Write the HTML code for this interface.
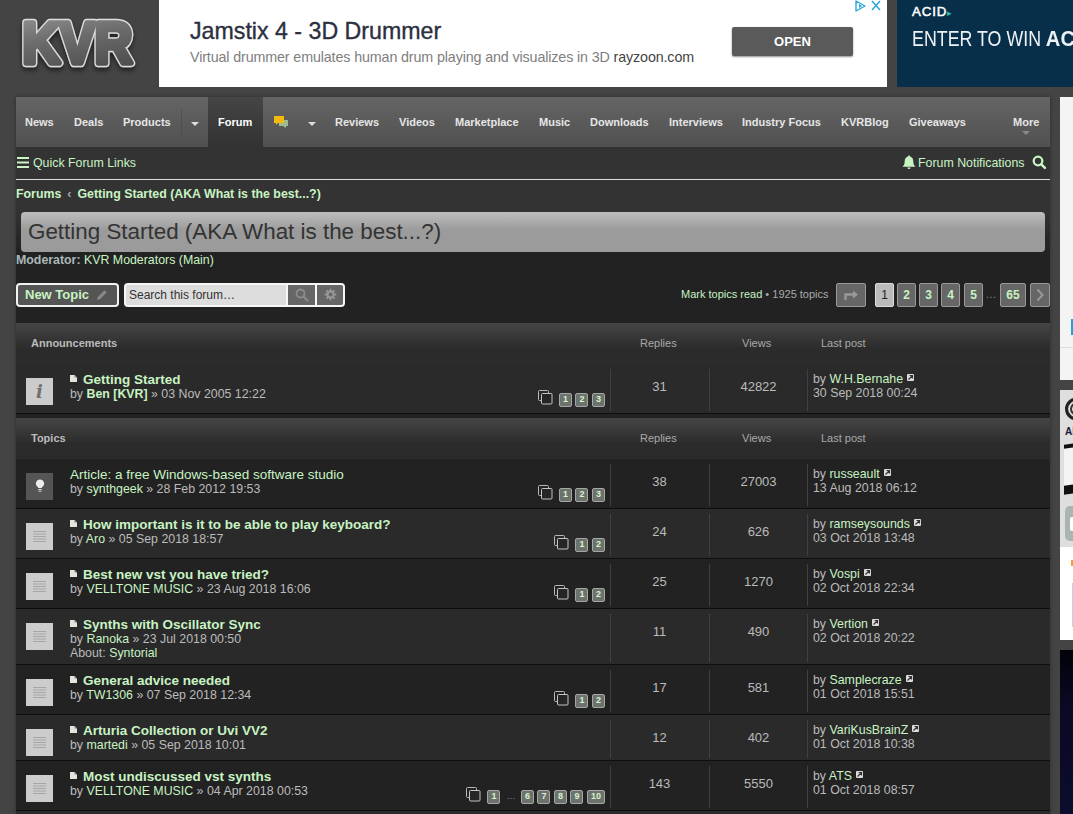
<!DOCTYPE html>
<html lang="en">
<head>
<meta charset="utf-8">
<title>Getting Started (AKA What is the best...?) - KVR Audio</title>
<style>
*{box-sizing:border-box;margin:0;padding:0}
html,body{width:1073px;height:814px;overflow:hidden}
body{background:#444;font-family:"Liberation Sans",Arial,sans-serif;font-size:12px;color:#bbb;position:relative}
a{color:#c8f3c3;text-decoration:none}
/* header */
#logo{position:absolute;left:14px;top:10px;width:130px;height:66px}
#ad1{position:absolute;left:159px;top:0;width:728px;height:87px;background:#fff}
#ad1 .t{position:absolute;left:31px;top:17px;font-size:23.2px;line-height:28px;color:#2b2f40;white-space:nowrap;-webkit-text-stroke:.35px #2b2f40}
#ad1 .d{position:absolute;left:31px;top:48px;font-size:14.3px;line-height:18px;color:#7e7e7e;white-space:nowrap;letter-spacing:-.13px}
#ad1 .d b{font-weight:normal;color:#444}
#ad1 .btn{position:absolute;left:573px;top:27px;width:121px;height:29px;background:#5a5a5a;border-radius:2px;color:#fff;font-weight:bold;font-size:13px;text-align:center;line-height:30px;box-shadow:0 1px 2px rgba(0,0,0,.45)}
#ad2{position:absolute;left:897px;top:0;width:176px;height:87px;background:#072f4a;overflow:hidden;color:#fff}
#ad2 .a{position:absolute;left:15px;top:4px;font-size:13.3px;line-height:16px;letter-spacing:.9px;-webkit-text-stroke:.5px #fff}
#ad2 .e{position:absolute;left:15px;top:26px;font-size:22px;line-height:26px;white-space:nowrap;transform:scaleX(.81);transform-origin:0 0;color:#eef2f5}
/* wrapper */
#wrap{position:absolute;left:16px;top:97px;width:1034px;height:717px;background:#333;overflow:hidden;box-shadow:0 0 4px rgba(0,0,0,.35)}
#nav{position:absolute;left:0;top:0;width:1034px;height:50px;background:linear-gradient(#656565,#505050);font-weight:bold;font-size:11px;color:#e6e6e6}
#nav span{position:absolute;top:19px;line-height:13px;white-space:nowrap}
#nav .act{position:absolute;left:192px;top:0;width:55px;height:50px;background:linear-gradient(#454545,#323232)}
.car{position:absolute;width:0;height:0;border-left:4px solid transparent;border-right:4px solid transparent;border-top:4px solid #ddd}
#ql{position:absolute;left:0;top:50px;width:1034px;height:32px;font-size:12.375px;line-height:14px}
#ql a{position:absolute;top:9px;white-space:nowrap}
#hr{position:absolute;left:0;top:82px;width:1034px;height:1px;background:#ddd}
#main{position:absolute;left:0;top:83px;width:1034px;height:634px;background:linear-gradient(#333 0,#333 32px,#222 72px,#222 100%)}
#bc{position:absolute;left:0;top:7px;font-weight:bold;font-size:12.375px;line-height:14px;white-space:nowrap}
#bc i{font-style:normal;color:#aaa;padding:0 6px 0 6px}
#ttl{position:absolute;left:5px;top:32px;width:1024px;height:40px;border-radius:4px;background:linear-gradient(#bebebe 0,#9b9b9b 45%,#9b9b9b 100%);color:#333;font-size:22.4px;line-height:40px;padding-left:7px;white-space:nowrap}
#mod{position:absolute;left:0;top:73px;font-size:12.375px;line-height:14px;white-space:nowrap}
#mod b{color:#a9b8b8}
.btn2{position:absolute;border:2px solid #f2f2f2;border-radius:4px;background:#555;height:24px}
#nt{left:0;top:103px;width:103px;font-weight:bold;font-size:13px;line-height:20px;color:#c8f3c3;padding-left:7px}
#sb{position:absolute;left:108px;top:103px;width:221px;height:24px;border:2px solid #f6f6f6;border-radius:4px;background:#ddd;overflow:hidden}
#sb .in{position:absolute;left:3px;top:3px;font-size:12px;line-height:14px;color:#333;white-space:nowrap}
#sb .b1{position:absolute;left:160px;top:0;width:29px;height:20px;background:#666;border-left:2px solid #f6f6f6}
#sb .b2{position:absolute;left:191px;top:0;width:26px;height:20px;background:#666}
#pg{position:absolute;top:103px;left:0;width:1034px;height:24px;font-size:11px}
#pg .mt{position:absolute;left:665px;top:5px;line-height:13px;white-space:nowrap;color:#aaa}
.pb{position:absolute;top:0;height:24px;width:19px;border:1px solid #999;border-radius:2px;background:#666;color:#c8f3c3;font-weight:bold;font-size:12px;line-height:22px;text-align:center}
.pb.cur{background:#bbb;border-color:#ddd;color:#222;font-weight:normal}
/* lists */
.lh{position:absolute;left:0;width:1034px;height:41px;background:linear-gradient(#454545 0,#2b2b2b 26px,#2b2b2b 100%);font-size:11px;color:#aaa}
.lh span{position:absolute;top:14px;line-height:13px;white-space:nowrap}
.lh b{position:absolute;left:15px;top:14px;line-height:13px;color:#bbb}
.row{position:absolute;left:0;width:1034px;border-bottom:1px solid #0e0e0e;font-size:12.375px;line-height:14px}
.row.d{background:#222}.row.l{background:#2a2a2a}
.ic{position:absolute;left:10px;top:14px;width:27px;height:27px;background:#ccc}
.ic.dk{background:#555}
.tt{position:absolute;left:54px;top:9px;white-space:nowrap}
.tt .t{font-size:13.5px;line-height:14px}
.tt .t.b{font-weight:bold}
.tt .doc{display:inline-block;width:7px;height:7px;margin-right:6px;vertical-align:2.500px}
.vs{position:absolute;top:5px;bottom:2px;width:1px;background:#404040}
.num{position:absolute;top:15px;width:99px;text-align:center;font-size:13px;line-height:15px;color:#bbb}
.lp{position:absolute;left:797px;top:8px;white-space:nowrap}
.lpi{display:inline-block;width:7px;height:7px;margin-left:.5px;vertical-align:2px}
.pgs{position:absolute;right:445px;top:29px;height:13px;white-space:nowrap;font-size:0}
.pgs a{display:inline-block;vertical-align:top;min-width:13px;height:13.500px;margin-left:3.500px;padding:0 3px;border:1px solid #a4a8a4;border-radius:2px;background:#6d726d;color:#d4f4d0;font-weight:bold;font-size:9px;line-height:11.500px;text-align:center}
.pgs svg{vertical-align:top;margin-right:2.500px;margin-top:-3px}
.pgs i{display:inline-block;vertical-align:top;font-style:normal;font-size:9px;line-height:13px;color:#999;margin-left:4px;width:13px;text-align:center}
/* right strip */
.rs{position:absolute;left:1060px;width:13px}
</style>
</head>
<body>
<svg id="logo" viewBox="0 0 130 66"><defs><linearGradient id="lg" x1="0" y1="0" x2="0.300" y2="1"><stop offset="0" stop-color="#979797"/><stop offset=".5" stop-color="#6c6c6c"/><stop offset="1" stop-color="#505050"/></linearGradient><filter id="ls" x="-10%" y="-10%" width="120%" height="140%"><feDropShadow dx="0" dy="3" stdDeviation="2.500" flood-color="#000" flood-opacity=".55"/></filter></defs>
<g style="font-family:'Liberation Sans',sans-serif;font-weight:bold;font-size:58px" stroke-linejoin="round"><text x="8.500" y="53" textLength="110" lengthAdjust="spacingAndGlyphs" fill="#dcdcdc" stroke="#dcdcdc" stroke-width="8.500" filter="url(#ls)">KVR</text><text x="8.500" y="53" textLength="110" lengthAdjust="spacingAndGlyphs" fill="url(#lg)" stroke="url(#lg)" stroke-width="5.500">KVR</text></g></svg>
<div id="ad1"><div class="t">Jamstix 4 - 3D Drummer</div><div class="d">Virtual drummer emulates human drum playing and visualizes in 3D <b>rayzoon.com</b></div><div class="btn">OPEN</div>
<svg style="position:absolute;left:694px;top:-1px" width="30" height="14" viewBox="0 0 30 14"><path d="M3 2 L12 7 L3 12 Z" fill="none" stroke="#29a7d8" stroke-width="1.4" stroke-linejoin="round"/><path d="M6 5v4l3-2z" fill="#29a7d8"/><path d="M19 2l8 9M27 2l-8 9" stroke="#29a7d8" stroke-width="1.5" fill="none"/></svg></div>
<div id="ad2"><div class="a">ACID<span style="color:#2cc0b0;font-size:9px;-webkit-text-stroke:0;letter-spacing:0;margin-left:0">&#9656;</span></div><div class="e">ENTER TO WIN <b style="display:inline-block;transform:scaleX(1.13);transform-origin:0 0;letter-spacing:.3px">ACID</b></div></div>
<div id="wrap"><div id="nav"><div class="act"></div><span style="left:9px">News</span><span style="left:58px">Deals</span><span style="left:107px">Products</span><span style="left:202px;color:#fff">Forum</span><span style="left:319px">Reviews</span><span style="left:383px">Videos</span><span style="left:439px">Marketplace</span><span style="left:523px">Music</span><span style="left:574px">Downloads</span><span style="left:653px">Interviews</span><span style="left:726px">Industry Focus</span><span style="left:825px">KVRBlog</span><span style="left:893px">Giveaways</span><span style="left:997px">More</span><div class="car" style="left:175px;top:25px"></div><div class="car" style="left:292px;top:25px"></div><div class="car" style="left:1006px;top:34px;border-top-color:#8a8a8a"></div><div style="position:absolute;left:165px;top:12px;width:1px;height:26px;background:rgba(0,0,0,.12)"></div><svg style="position:absolute;left:257px;top:18px" width="16" height="14" viewBox="0 0 16 14"><path d="M6 5h9v6h-2v2l-3-2H6z" fill="#9dbb8f"/><path d="M1 1h10v7H5l-2 2V8H1z" fill="#f2b90f"/></svg></div><div id="ql">
<svg style="position:absolute;left:1px;top:10px" width="12" height="11" viewBox="0 0 12 11"><path d="M0 1h12M0 5.5h12M0 10h12" stroke="#c8f3c3" stroke-width="2"/></svg>
<a style="left:17px">Quick Forum Links</a>
<svg style="position:absolute;left:885.500px;top:7.500px" width="14" height="15.100" viewBox="0 0 13 14"><path d="M6.5 0.5c.6 0 1 .4 1 1 2 .5 3 2.200 3 4.500 0 2.500.8 3.800 2 4.800H.5c1.200-1 2-2.300 2-4.800 0-2.300 1-4 3-4.500 0-.6.400-1 1-1zM5 11.600h3a1.500 1.500 0 0 1-3 0z" fill="#c8f3c3"/></svg>
<a style="left:902px">Forum Notifications</a>
<svg style="position:absolute;left:1016px;top:8px" width="15" height="15" viewBox="0 0 15 15"><circle cx="6" cy="6" r="4.300" fill="none" stroke="#c8f3c3" stroke-width="2.300"/><path d="M9.300 9.300l3.600 3.600" stroke="#c8f3c3" stroke-width="2.600" stroke-linecap="round"/></svg>
</div><div id="hr"></div><div id="main"><div id="bc"><a>Forums</a><i>&#8249;</i><a>Getting Started (AKA What is the best...?)</a></div><div id="ttl">Getting Started (AKA What is the best...?)</div><div id="mod"><b>Moderator:</b> <a>KVR Moderators (Main)</a></div><div class="btn2" id="nt">New Topic<svg style="position:absolute;left:78px;top:4px" width="12" height="12" viewBox="0 0 12 12"><path d="M1 11l.8-3L8.500 1.300l2.200 2.200L4 10.200z" fill="#888"/></svg></div><div id="sb"><div class="in">Search this forum…</div><div class="b1"><svg style="position:absolute;left:7px;top:3px" width="14" height="14" viewBox="0 0 14 14"><circle cx="5.500" cy="5.500" r="4" fill="none" stroke="#8c8c8c" stroke-width="1.800"/><path d="M8.500 8.500l4 4" stroke="#8c8c8c" stroke-width="2.200" stroke-linecap="round"/></svg></div><div style="position:absolute;left:189px;top:0;width:2px;height:20px;background:#f6f6f6"></div><div class="b2"><svg style="position:absolute;left:6.500px;top:2.500px" width="13" height="13" viewBox="0 0 14 14"><g fill="none" stroke="#999"><circle cx="7" cy="7" r="3.200" stroke-width="2.200"/><path d="M7 .8v2.400M7 10.800v2.400M.8 7h2.400M10.800 7h2.400M2.600 2.600l1.700 1.700M9.700 9.700l1.700 1.700M11.400 2.600L9.700 4.300M4.300 9.700l-1.700 1.700" stroke-width="2"/></g></svg></div></div><div id="pg"><div class="mt"><a>Mark topics read</a> &bull; 1925 topics</div><div class="pb" style="left:820px;width:30px;color:#999"><svg style="position:absolute;left:7px;top:5px" width="15" height="12" viewBox="0 0 15 12"><path d="M1.500 11V5.500h8" fill="none" stroke="#999" stroke-width="2.400"/><path d="M9 1.500l5 4-5 4z" fill="#999"/></svg></div><div class="pb cur" style="left:859px">1</div><div class="pb" style="left:881px">2</div><div class="pb" style="left:903px">3</div><div class="pb" style="left:925px">4</div><div class="pb" style="left:948px">5</div><div style="position:absolute;left:968px;top:5px;width:14px;text-align:center;color:#888;font-size:11px">…</div><div class="pb" style="left:984px;width:26px">65</div><div class="pb" style="left:1014px;width:20px;color:#999"><svg style="position:absolute;left:5px;top:4px" width="8" height="14" viewBox="0 0 8 14"><path d="M1.500 1.500l5 5.500-5 5.500" fill="none" stroke="#999" stroke-width="2"/></svg></div></div><div class="lh" style="top:143px"><b>Announcements</b><span style="left:624px">Replies</span><span style="left:726px">Views</span><span style="left:805px">Last post</span></div><div class="row l" style="top:184px;height:50px"><div class="ic"><span style="position:absolute;left:0;width:27px;top:3px;text-align:center;font-family:'DejaVu Serif',serif;font-style:italic;font-weight:bold;font-size:18px;line-height:21px;color:#707070">i</span></div><div class="tt"><svg class="doc" viewBox="0 0 7 7"><path d="M0 0h4.500L7 2.500V7H0z" fill="#e4e4dc"/><path d="M4.500 0v2.500H7z" fill="#888"/></svg><a class="t b">Getting Started</a><br>by <a style="font-weight:bold">Ben [KVR]</a> &raquo; 03 Nov 2005 12:22</div><div class="pgs"><svg width="15" height="15" viewBox="0 0 15 15"><rect x=".5" y=".5" width="10" height="10" rx="1" fill="none" stroke="#b8b8b8"/><rect x="3.500" y="3.500" width="10.500" height="10.500" rx="1" fill="#262626" stroke="#c4c4c4"/></svg><a>1</a><a>2</a><a>3</a></div><div class="vs" style="left:594px"></div><div class="vs" style="left:693px"></div><div class="vs" style="left:791px"></div><div class="num" style="left:594px">31</div><div class="num" style="left:693px">42822</div><div class="lp">by <a>W.H.Bernahe</a> <svg class="lpi" viewBox="0 0 7 7"><rect width="7" height="7" rx="1" fill="#ddd"/><path d="M1.500 5.500L5 2M2.500 1.500h3v3" fill="none" stroke="#333" stroke-width="1.200"/></svg><br>30 Sep 2018 00:24</div></div><div class="lh" style="top:238px"><b>Topics</b><span style="left:624px">Replies</span><span style="left:726px">Views</span><span style="left:805px">Last post</span></div><div class="row d" style="top:279px;height:50px"><div class="ic dk"><svg style="position:absolute;left:8.500px;top:6px" width="10" height="13.600" viewBox="0 0 11 15"><path d="M5.500 0.500a4.500 4.500 0 0 1 2.700 8.100c-.5.400-.7.900-.7 1.400h-4c0-.5-.2-1-.7-1.400A4.500 4.500 0 0 1 5.500.5z" fill="#eee"/><path d="M3.500 11h4v1.200h-4zM4 13h3v1H4z" fill="#ddd"/></svg></div><div class="tt"><a class="t">Article: a free Windows-based software studio</a><br>by <a>synthgeek</a> &raquo; 28 Feb 2012 19:53</div><div class="pgs"><svg width="15" height="15" viewBox="0 0 15 15"><rect x=".5" y=".5" width="10" height="10" rx="1" fill="none" stroke="#b8b8b8"/><rect x="3.500" y="3.500" width="10.500" height="10.500" rx="1" fill="#262626" stroke="#c4c4c4"/></svg><a>1</a><a>2</a><a>3</a></div><div class="vs" style="left:594px"></div><div class="vs" style="left:693px"></div><div class="vs" style="left:791px"></div><div class="num" style="left:594px">38</div><div class="num" style="left:693px">27003</div><div class="lp">by <a>russeault</a> <svg class="lpi" viewBox="0 0 7 7"><rect width="7" height="7" rx="1" fill="#ddd"/><path d="M1.500 5.500L5 2M2.500 1.500h3v3" fill="none" stroke="#333" stroke-width="1.200"/></svg><br>13 Aug 2018 06:12</div></div><div class="row l" style="top:329px;height:50px"><div class="ic"><svg style="position:absolute;left:7px;top:8px" width="13" height="12" viewBox="0 0 13 12"><path d="M0 .5h13M0 3h13M0 5.500h13M0 8h13M0 10.500h13" stroke="#a6a6a6" stroke-width="1"/></svg></div><div class="tt"><svg class="doc" viewBox="0 0 7 7"><path d="M0 0h4.500L7 2.500V7H0z" fill="#e4e4dc"/><path d="M4.500 0v2.500H7z" fill="#888"/></svg><a class="t b">How important is it to be able to play keyboard?</a><br>by <a>Aro</a> &raquo; 05 Sep 2018 18:57</div><div class="pgs"><svg width="15" height="15" viewBox="0 0 15 15"><rect x=".5" y=".5" width="10" height="10" rx="1" fill="none" stroke="#b8b8b8"/><rect x="3.500" y="3.500" width="10.500" height="10.500" rx="1" fill="#262626" stroke="#c4c4c4"/></svg><a>1</a><a>2</a></div><div class="vs" style="left:594px"></div><div class="vs" style="left:693px"></div><div class="vs" style="left:791px"></div><div class="num" style="left:594px">24</div><div class="num" style="left:693px">626</div><div class="lp">by <a>ramseysounds</a> <svg class="lpi" viewBox="0 0 7 7"><rect width="7" height="7" rx="1" fill="#ddd"/><path d="M1.500 5.500L5 2M2.500 1.500h3v3" fill="none" stroke="#333" stroke-width="1.200"/></svg><br>03 Oct 2018 13:48</div></div><div class="row d" style="top:379px;height:50px"><div class="ic"><svg style="position:absolute;left:7px;top:8px" width="13" height="12" viewBox="0 0 13 12"><path d="M0 .5h13M0 3h13M0 5.500h13M0 8h13M0 10.500h13" stroke="#a6a6a6" stroke-width="1"/></svg></div><div class="tt"><svg class="doc" viewBox="0 0 7 7"><path d="M0 0h4.500L7 2.500V7H0z" fill="#e4e4dc"/><path d="M4.500 0v2.500H7z" fill="#888"/></svg><a class="t b">Best new vst you have tried?</a><br>by <a>VELLTONE MUSIC</a> &raquo; 23 Aug 2018 16:06</div><div class="pgs"><svg width="15" height="15" viewBox="0 0 15 15"><rect x=".5" y=".5" width="10" height="10" rx="1" fill="none" stroke="#b8b8b8"/><rect x="3.500" y="3.500" width="10.500" height="10.500" rx="1" fill="#262626" stroke="#c4c4c4"/></svg><a>1</a><a>2</a></div><div class="vs" style="left:594px"></div><div class="vs" style="left:693px"></div><div class="vs" style="left:791px"></div><div class="num" style="left:594px">25</div><div class="num" style="left:693px">1270</div><div class="lp">by <a>Vospi</a> <svg class="lpi" viewBox="0 0 7 7"><rect width="7" height="7" rx="1" fill="#ddd"/><path d="M1.500 5.500L5 2M2.500 1.500h3v3" fill="none" stroke="#333" stroke-width="1.200"/></svg><br>02 Oct 2018 22:34</div></div><div class="row l" style="top:429px;height:56px"><div class="ic"><svg style="position:absolute;left:7px;top:8px" width="13" height="12" viewBox="0 0 13 12"><path d="M0 .5h13M0 3h13M0 5.500h13M0 8h13M0 10.500h13" stroke="#a6a6a6" stroke-width="1"/></svg></div><div class="tt"><svg class="doc" viewBox="0 0 7 7"><path d="M0 0h4.500L7 2.500V7H0z" fill="#e4e4dc"/><path d="M4.500 0v2.500H7z" fill="#888"/></svg><a class="t b">Synths with Oscillator Sync</a><br>by <a>Ranoka</a> &raquo; 23 Jul 2018 00:50<br>About: <a>Syntorial</a></div><div class="vs" style="left:594px"></div><div class="vs" style="left:693px"></div><div class="vs" style="left:791px"></div><div class="num" style="left:594px">11</div><div class="num" style="left:693px">490</div><div class="lp">by <a>Vertion</a> <svg class="lpi" viewBox="0 0 7 7"><rect width="7" height="7" rx="1" fill="#ddd"/><path d="M1.500 5.500L5 2M2.500 1.500h3v3" fill="none" stroke="#333" stroke-width="1.200"/></svg><br>02 Oct 2018 20:22</div></div><div class="row d" style="top:485px;height:50px"><div class="ic"><svg style="position:absolute;left:7px;top:8px" width="13" height="12" viewBox="0 0 13 12"><path d="M0 .5h13M0 3h13M0 5.500h13M0 8h13M0 10.500h13" stroke="#a6a6a6" stroke-width="1"/></svg></div><div class="tt"><svg class="doc" viewBox="0 0 7 7"><path d="M0 0h4.500L7 2.500V7H0z" fill="#e4e4dc"/><path d="M4.500 0v2.500H7z" fill="#888"/></svg><a class="t b">General advice needed</a><br>by <a>TW1306</a> &raquo; 07 Sep 2018 12:34</div><div class="pgs"><svg width="15" height="15" viewBox="0 0 15 15"><rect x=".5" y=".5" width="10" height="10" rx="1" fill="none" stroke="#b8b8b8"/><rect x="3.500" y="3.500" width="10.500" height="10.500" rx="1" fill="#262626" stroke="#c4c4c4"/></svg><a>1</a><a>2</a></div><div class="vs" style="left:594px"></div><div class="vs" style="left:693px"></div><div class="vs" style="left:791px"></div><div class="num" style="left:594px">17</div><div class="num" style="left:693px">581</div><div class="lp">by <a>Samplecraze</a> <svg class="lpi" viewBox="0 0 7 7"><rect width="7" height="7" rx="1" fill="#ddd"/><path d="M1.500 5.500L5 2M2.500 1.500h3v3" fill="none" stroke="#333" stroke-width="1.200"/></svg><br>01 Oct 2018 15:51</div></div><div class="row l" style="top:535px;height:46px"><div class="ic"><svg style="position:absolute;left:7px;top:8px" width="13" height="12" viewBox="0 0 13 12"><path d="M0 .5h13M0 3h13M0 5.500h13M0 8h13M0 10.500h13" stroke="#a6a6a6" stroke-width="1"/></svg></div><div class="tt"><svg class="doc" viewBox="0 0 7 7"><path d="M0 0h4.500L7 2.500V7H0z" fill="#e4e4dc"/><path d="M4.500 0v2.500H7z" fill="#888"/></svg><a class="t b">Arturia Collection or Uvi VV2</a><br>by <a>martedi</a> &raquo; 05 Sep 2018 10:01</div><div class="vs" style="left:594px"></div><div class="vs" style="left:693px"></div><div class="vs" style="left:791px"></div><div class="num" style="left:594px">12</div><div class="num" style="left:693px">402</div><div class="lp">by <a>VariKusBrainZ</a> <svg class="lpi" viewBox="0 0 7 7"><rect width="7" height="7" rx="1" fill="#ddd"/><path d="M1.500 5.500L5 2M2.500 1.500h3v3" fill="none" stroke="#333" stroke-width="1.200"/></svg><br>01 Oct 2018 10:38</div></div><div class="row d" style="top:581px;height:50px"><div class="ic"><svg style="position:absolute;left:7px;top:8px" width="13" height="12" viewBox="0 0 13 12"><path d="M0 .5h13M0 3h13M0 5.500h13M0 8h13M0 10.500h13" stroke="#a6a6a6" stroke-width="1"/></svg></div><div class="tt"><svg class="doc" viewBox="0 0 7 7"><path d="M0 0h4.500L7 2.500V7H0z" fill="#e4e4dc"/><path d="M4.500 0v2.500H7z" fill="#888"/></svg><a class="t b">Most undiscussed vst synths</a><br>by <a>VELLTONE MUSIC</a> &raquo; 04 Apr 2018 00:53</div><div class="pgs"><svg width="15" height="15" viewBox="0 0 15 15"><rect x=".5" y=".5" width="10" height="10" rx="1" fill="none" stroke="#b8b8b8"/><rect x="3.500" y="3.500" width="10.500" height="10.500" rx="1" fill="#262626" stroke="#c4c4c4"/></svg><a>1</a><i>…</i><a>6</a><a>7</a><a>8</a><a>9</a><a>10</a></div><div class="vs" style="left:594px"></div><div class="vs" style="left:693px"></div><div class="vs" style="left:791px"></div><div class="num" style="left:594px">143</div><div class="num" style="left:693px">5550</div><div class="lp">by <a>ATS</a> <svg class="lpi" viewBox="0 0 7 7"><rect width="7" height="7" rx="1" fill="#ddd"/><path d="M1.500 5.500L5 2M2.500 1.500h3v3" fill="none" stroke="#333" stroke-width="1.200"/></svg><br>01 Oct 2018 08:57</div></div><div class="row l" style="top:631px;height:50px"></div></div></div><div class="rs" style="top:97px;height:283px;background:#f4f4f4"></div>
<div class="rs" style="top:319px;left:1071px;width:2px;height:16px;background:#1da1e0"></div>
<div class="rs" style="top:347px;height:1px;background:#ddd"></div>
<div class="rs" style="top:390px;height:250px;background:#fff;overflow:hidden">
<div style="position:absolute;left:0;top:0;width:13px;height:157px;background:#dedede"></div>
<div style="position:absolute;left:5px;top:7px;width:26px;height:24px;border-radius:50%;border:3px solid #222;box-shadow:inset 0 0 0 2px #dedede,inset 0 0 0 4px #333"></div>
<div style="position:absolute;left:5px;top:36px;font-weight:bold;font-size:10px;line-height:12px;color:#1a1a3a;white-space:nowrap">AL</div>
<div style="position:absolute;left:4px;top:54px;width:12px;height:50px;background:#f4f4f4;border-top:4px solid #111;border-bottom:9px solid #111;transform:skewY(-8deg)"></div>
<div style="position:absolute;left:5px;top:116px;width:20px;height:35px;border-radius:5px;background:#aab4b0"></div>
<div style="position:absolute;left:10px;top:127px;width:10px;height:14px;border-radius:2px;background:#fff"></div>
<div style="position:absolute;left:11px;top:170px;width:2px;height:6px;background:#f0a030"></div>
<div style="position:absolute;left:12px;top:193px;width:1px;height:44px;background:#ccd"></div>
</div>
<div class="rs" style="top:650px;height:164px;background:linear-gradient(#02020a,#0a0a26 60px,#0c0c2c)"></div>
</body>
</html>
